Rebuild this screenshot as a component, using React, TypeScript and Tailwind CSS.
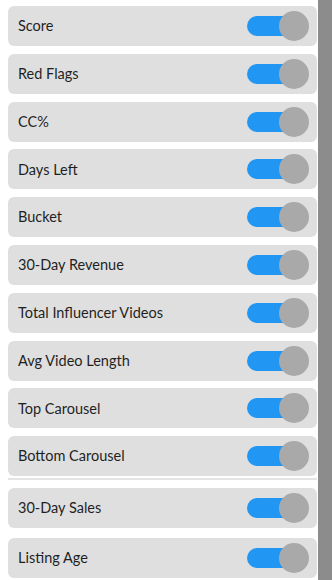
import React from "react";

const groupA = [
  "Score",
  "Red Flags",
  "CC%",
  "Days Left",
  "Bucket",
  "30-Day Revenue",
  "Total Influencer Videos",
  "Avg Video Length",
  "Top Carousel",
  "Bottom Carousel",
];
const groupB = ["30-Day Sales", "Listing Age"];

function Toggle() {
  return (
    <div className="relative w-[62px] h-[30px] flex items-center">
      <div className="absolute left-0 top-[5px] w-[48px] h-[20px] rounded-full bg-[#2196f3]" />
      <div className="absolute right-0 top-0 w-[30px] h-[30px] rounded-full bg-[#a9a9a9]" />
    </div>
  );
}

function Row({ label }: { label: string }) {
  return (
    <div className="h-[40px] shrink-0 rounded-[6px] bg-[#dfdfdf] flex items-center justify-between pl-[10px] pr-[8px]">
      <span className="text-[14.5px] text-[#1f1f1f]">{label}</span>
      <Toggle />
    </div>
  );
}

export default function App() {
  return (
    <div
      className="w-[332px] h-[580px] overflow-hidden bg-white flex"
      style={{ fontFamily: "Lato, 'Noto Sans', sans-serif" }}
    >
      <div className="flex-1 pl-[8px] pr-[1px] pt-[6px] flex flex-col">
        <div className="flex flex-col gap-[7.8px]">
          {groupA.map((l) => (
            <Row key={l} label={l} />
          ))}
        </div>
        <div className="mt-[2px] h-[2px] bg-[#e4e4e4]" />
        <div className="mt-[8px] flex flex-col gap-[10px]">
          {groupB.map((l) => (
            <Row key={l} label={l} />
          ))}
        </div>
      </div>
      <div className="w-[14px] h-full bg-[#8c8c8c]" />
    </div>
  );
}
